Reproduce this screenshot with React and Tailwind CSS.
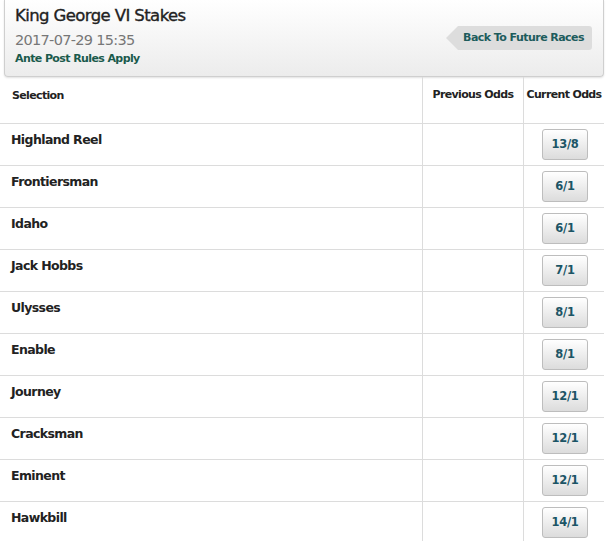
import React from "react";

const rows = [
  ["Highland Reel", "13/8"],
  ["Frontiersman", "6/1"],
  ["Idaho", "6/1"],
  ["Jack Hobbs", "7/1"],
  ["Ulysses", "8/1"],
  ["Enable", "8/1"],
  ["Journey", "12/1"],
  ["Cracksman", "12/1"],
  ["Eminent", "12/1"],
  ["Hawkbill", "14/1"],
];

export default function App() {
  return (
    <div className="w-[606px] h-[541px] overflow-hidden bg-white whitespace-nowrap" style={{ fontFamily: '"DejaVu Sans", Verdana, sans-serif' }}>
      <div className="ml-[4px] w-[600px] h-[77px] border-x border-b border-[#cfcfcf] rounded-b-[4px] bg-gradient-to-b from-white to-[#ececec] shadow-[0_1px_2px_rgba(0,0,0,0.12)] flex justify-between">
        <div className="pl-[10px] pt-[5px]">
          <div className="text-[16.5px] leading-[22px] text-[#222] tracking-[-0.6px] [-webkit-text-stroke:0.35px_#222]">King George VI Stakes</div>
          <div className="text-[14.5px] leading-[20px] text-[#777] mt-[3px] tracking-[-0.7px]">2017-07-29 15:35</div>
          <div className="text-[11px] leading-[16px] font-bold text-[#1a5a4c] mt-[1px] tracking-[-0.6px]">Ante Post Rules Apply</div>
        </div>
        <div className="pt-[26px] pr-[11px]">
          <div className="flex items-center">
            <div className="w-0 h-0 border-y-[12px] border-y-transparent border-r-[12px] border-r-[#dddddd]" />
            <div className="h-[24px] bg-[#dddddd] rounded-r-[3px] pl-[5px] pr-[8px] flex items-center text-[11px] font-bold text-[#1d5c5c] tracking-[-0.55px]">
              Back To Future Races
            </div>
          </div>
        </div>
      </div>
      <div className="w-[604px]">
        <div className="flex h-[47px] border-b border-[#dcdcdc] text-[11px] font-bold text-[#222] tracking-[-0.65px]">
          <div className="w-[422px] pl-[12px] pt-[11px]">Selection</div>
          <div className="w-[101px] border-l border-[#dcdcdc] pt-[10px] text-center">Previous Odds</div>
          <div className="flex-1 border-l border-[#dcdcdc] pt-[10px] text-center">Current Odds</div>
        </div>
        {rows.map(([name, odds]) => (
          <div key={name} className="flex h-[42px] border-b border-[#dcdcdc]">
            <div className="w-[422px] pl-[11px] pt-[7px] text-[12.5px] font-bold text-[#222] tracking-[-0.6px]">{name}</div>
            <div className="w-[101px] border-l border-[#dcdcdc]" />
            <div className="flex-1 border-l border-[#dcdcdc] flex items-center justify-center pl-[2px]">
              <div className="w-[46px] h-[31px] border border-[#bdbdbd] rounded-[3px] bg-gradient-to-b from-white to-[#dcdcdc] flex items-center justify-center text-[11.5px] font-bold text-[#1b5566] tracking-[-0.3px]">
                {odds}
              </div>
            </div>
          </div>
        ))}
      </div>
    </div>
  );
}
